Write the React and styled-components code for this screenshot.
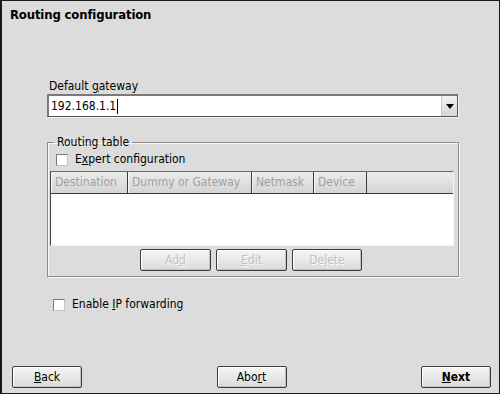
import styled, { createGlobalStyle } from "styled-components";

const GlobalStyle = createGlobalStyle`
  html, body {
    margin: 0;
    padding: 0;
    background: #dcdcdc;
  }
  * {
    box-sizing: border-box;
  }
`;

const font = `"DejaVu Sans Condensed", "DejaVu Sans", sans-serif`;

const Window = styled.div`
  width: 500px;
  height: 394px;
  display: flex;
  flex-direction: column;
  background: #dcdcdc;
  border: 1px solid #1a1a1a;
  border-left-width: 2px;
  font-family: ${font};
  font-size: 12px;
  line-height: 15px;
  color: #000;
`;

const Title = styled.h1`
  margin: 0;
  padding: 6px 0 0 8px;
  font-size: 13px;
  line-height: 16px;
  font-weight: bold;
  letter-spacing: -0.15px;
`;

const Body = styled.div`
  display: flex;
  flex-direction: column;
  padding: 0 0 0 45px;
  width: 456px;
`;

const Label = styled.label`
  display: block;
  margin-top: 56px;
  padding-left: 2px;
`;

const Mn = styled.span`
  text-decoration: underline;
  text-underline-offset: 1px;
`;

const Combo = styled.div`
  display: flex;
  align-items: stretch;
  width: 411px;
  height: 23px;
  background: #fff;
  border: 1px solid #555;
  border-top: 2px solid #7a7a7a;
  border-left: 2px solid #7a7a7a;
  box-shadow: 1px 1px 0 #f4f4f4;
`;

const ComboText = styled.div`
  flex: 1;
  display: flex;
  align-items: center;
  padding-left: 2px;
`;

const Caret = styled.span`
  display: inline-block;
  width: 1px;
  height: 15px;
  background: #000;
  margin-left: 1px;
`;

const ComboButton = styled.div`
  width: 16px;
  display: flex;
  align-items: center;
  justify-content: center;
  background: linear-gradient(#f2f2f2, #d6d6d6);
  border-left: 1px solid #c8c8c8;
`;

const Group = styled.fieldset`
  margin: 18px 0 0 0;
  width: 412px;
  padding: 0 3px 5px 2px;
  border: 1px solid #8c8c8c;
  box-shadow: 1px 1px 0 #f8f8f8, inset 1px 1px 0 #f8f8f8;
  min-width: 0;
`;

const Legend = styled.legend`
  margin-left: 4px;
  padding: 0 3px;
`;

const CheckRow = styled.label`
  display: flex;
  align-items: center;
  gap: 7px;
  margin: ${(p) => p.$margin || "0"};
  padding-left: ${(p) => p.$indent || "0"};
`;

const Box = styled.span`
  width: 12px;
  height: 12px;
  background: #fff;
  border-top: 1px solid #7a7a7a;
  border-left: 1px solid #7a7a7a;
  border-right: 1px solid #c4c4c4;
  border-bottom: 1px solid #c4c4c4;
`;

const Table = styled.div`
  margin-top: 4px;
  width: 404px;
  height: 75px;
  display: flex;
  flex-direction: column;
  background: #fff;
  border-top: 1px solid #666;
  border-left: 1px solid #444;
  border-right: 1px solid #f4f4f4;
  border-bottom: 1px solid #f4f4f4;
`;

const Header = styled.div`
  display: flex;
  height: 22px;
  background: linear-gradient(#ececec, #d4d4d4);
  border-bottom: 1px solid #3a3a3a;
`;

const HeaderCell = styled.div`
  width: ${(p) => (p.$w ? p.$w + "px" : "auto")};
  flex: ${(p) => (p.$w ? "none" : "1")};
  display: flex;
  align-items: center;
  padding-left: 4px;
  color: #a0a0a0;
  border-right: ${(p) => (p.$w ? "1px solid #3a3a3a" : "none")};
  box-shadow: ${(p) => (p.$w ? "inset 1px 0 0 #f8f8f8" : "none")};
  white-space: nowrap;
  overflow: hidden;
`;

const ButtonRow = styled.div`
  display: flex;
  justify-content: center;
  gap: 5px;
  margin-top: 3px;
  padding-right: 3px;
`;

const Button = styled.button`
  width: ${(p) => p.$w || 71}px;
  height: 22px;
  padding: 0;
  font-family: ${font};
  font-size: 12px;
  font-weight: ${(p) => (p.$bold ? "bold" : "normal")};
  color: ${(p) => (p.disabled ? "#c2c2c2" : "#000")};
  text-shadow: ${(p) => (p.disabled ? "1px 1px 0 #fafafa" : "none")};
  background: linear-gradient(#f6f6f6, #dadada);
  border: 1px solid #3c3c3c;
  border-radius: 2px;
  box-shadow: inset 1px 1px 0 #ffffff, inset -1px -1px 0 #c0c0c0;
`;

const Footer = styled.div`
  margin-top: auto;
  display: flex;
  justify-content: space-between;
  padding: 0 8px 5px 10px;
`;

function Arrow() {
  return (
    <svg width="8" height="5" viewBox="0 0 8 5">
      <polygon points="0,0 8,0 4,5" fill="#000" />
    </svg>
  );
}

const columns = [
  { name: "Destination", w: 77 },
  { name: "Dummy or Gateway", w: 124 },
  { name: "Netmask", w: 62 },
  { name: "Device", w: 53 },
  { name: "" },
];

export default function App() {
  return (
    <>
      <GlobalStyle />
      <Window>
        <Title>Routing configuration</Title>
        <Body>
          <Label>
            Default <Mn>g</Mn>ateway
          </Label>
          <Combo>
            <ComboText>
              192.168.1.1
              <Caret />
            </ComboText>
            <ComboButton>
              <Arrow />
            </ComboButton>
          </Combo>

          <Group>
            <Legend>Routing table</Legend>
            <CheckRow $indent="6px" $margin="2px 0 0 0">
              <Box />
              <span>
                E<Mn>x</Mn>pert configuration
              </span>
            </CheckRow>
            <Table>
              <Header>
                {columns.map((c, i) => (
                  <HeaderCell key={i} $w={c.w}>
                    {c.name}
                  </HeaderCell>
                ))}
              </Header>
            </Table>
            <ButtonRow>
              <Button disabled>
                Ad<Mn>d</Mn>
              </Button>
              <Button disabled>
                <Mn>E</Mn>dit
              </Button>
              <Button disabled $w={70}>
                De<Mn>l</Mn>ete
              </Button>
            </ButtonRow>
          </Group>

          <CheckRow $indent="6px" $margin="20px 0 0 0">
            <Box />
            <span>
              Enable <Mn>I</Mn>P forwarding
            </span>
          </CheckRow>
        </Body>

        <Footer>
          <Button $w={70}>
            <Mn>B</Mn>ack
          </Button>
          <Button $w={70}>
            Abo<Mn>r</Mn>t
          </Button>
          <Button $w={70} $bold>
            <Mn>N</Mn>ext
          </Button>
        </Footer>
      </Window>
    </>
  );
}
